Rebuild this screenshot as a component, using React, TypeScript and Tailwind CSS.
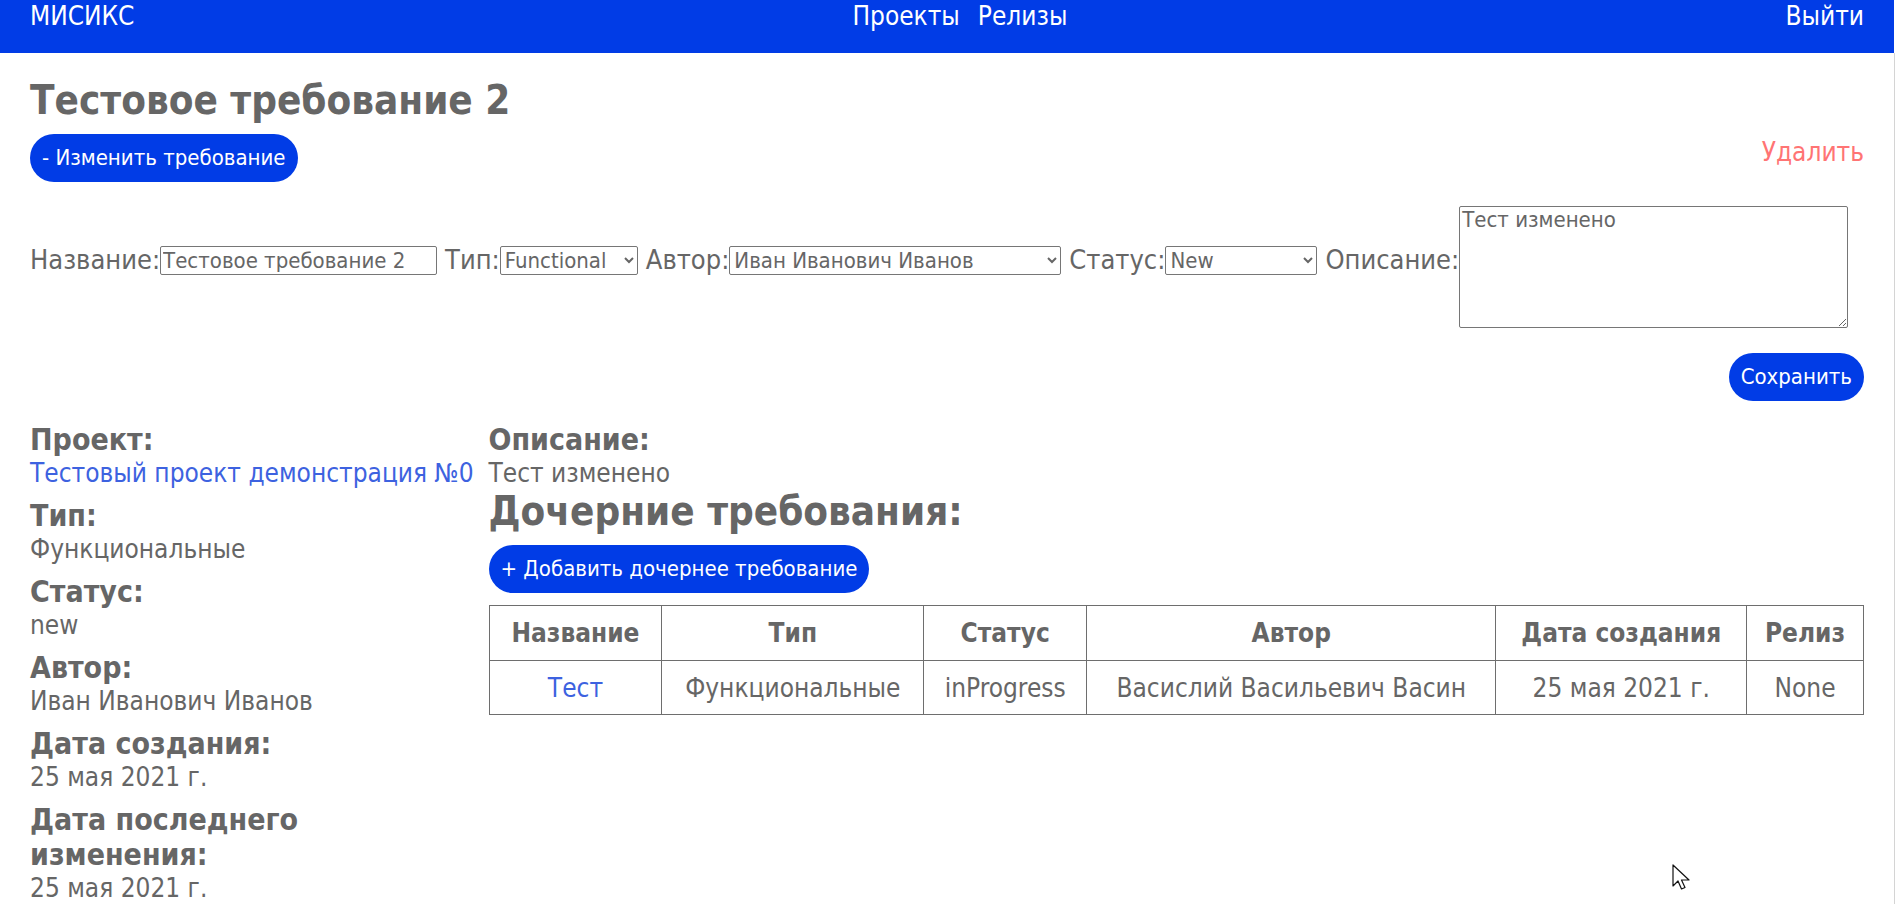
import React from "react";

const font = { fontFamily: '"DejaVu Sans Condensed", "DejaVu Sans", Tahoma, sans-serif' };

const info: { label: string; value: string; link?: boolean }[] = [
  { label: "Проект:", value: "Тестовый проект демонстрация №0", link: true },
  { label: "Тип:", value: "Функциональные" },
  { label: "Статус:", value: "new" },
  { label: "Автор:", value: "Иван Иванович Иванов" },
  { label: "Дата создания:", value: "25 мая 2021 г." },
  { label: "Дата последнего изменения:", value: "25 мая 2021 г." },
];

const columns = [
  { title: "Название", w: "w-[173px]" },
  { title: "Тип", w: "w-[262px]" },
  { title: "Статус", w: "w-[163px]" },
  { title: "Автор", w: "w-[410px]" },
  { title: "Дата создания", w: "w-[251px]" },
  { title: "Релиз", w: "w-[117px]" },
];

const NavBar = () => (
  <nav className="h-[53px] bg-[#013ce6] text-white text-[26px] leading-[32px] flex justify-between items-start px-[30px]">
    <a>МИСИКС</a>
    <div className="flex gap-[18px]">
      <a>Проекты</a>
      <a>Релизы</a>
    </div>
    <a>Выйти</a>
  </nav>
);

const PillButton: React.FC<{ children: React.ReactNode }> = ({ children }) => (
  <button className="bg-[#013ce6] text-white rounded-full h-[48px] px-[12px] text-[22px] leading-[26px]">
    {children}
  </button>
);

const field = "h-[29px] border border-[#767676] rounded-[2px] text-[22px] leading-[26px]";

const EditForm = () => (
  <div className="mt-[10px]">
    <div className="flex items-center text-[27px] leading-[32px]">
      <label>Название:</label>
      <input className={"w-[277px] px-[2px] " + field} defaultValue="Тестовое требование 2" />
      <label className="ml-[8px]">Тип:</label>
      <select className={"w-[138px] " + field} defaultValue="Functional">
        <option>Functional</option>
      </select>
      <label className="ml-[8px]">Автор:</label>
      <select className={"w-[332px] " + field}>
        <option>Иван Иванович Иванов</option>
      </select>
      <label className="ml-[8px]">Статус:</label>
      <select className={"w-[152px] " + field}>
        <option>New</option>
      </select>
      <label className="ml-[8px]">Описание:</label>
      <textarea
        className="mt-[14px] w-[389px] h-[122px] border border-[#767676] rounded-[2px] px-[2px] text-[22px] leading-[26px]"
        defaultValue="Тест изменено"
      />
    </div>
    <div className="flex justify-end mt-[25px]">
      <PillButton>Сохранить</PillButton>
    </div>
  </div>
);

const Details = () => (
  <div className="w-1/4 shrink-0 pr-[8px]">
    {info.map((row) => (
      <div key={row.label} className="mb-[9px]">
        <h3 className="font-bold text-[30px] leading-[35px]">{row.label}</h3>
        <div className={"text-[26px] leading-[32px] " + (row.link ? "text-[#3d62e0]" : "")}>{row.value}</div>
      </div>
    ))}
  </div>
);

const Children = () => (
  <div className="flex-1">
    <h3 className="font-bold text-[30px] leading-[35px]">Описание:</h3>
    <div className="text-[26px] leading-[32px]">Тест изменено</div>
    <h2 className="font-bold text-[40px] leading-[44px]">Дочерние требования:</h2>
    <div className="mt-[12px]">
      <PillButton>+ Добавить дочернее требование</PillButton>
    </div>
    <table className="mt-[12px] w-full border-collapse text-[26px] leading-[32px] text-center">
      <thead>
        <tr>
          {columns.map((c) => (
            <th key={c.title} className={"border border-[#6e6e6e] font-bold h-[55px] " + c.w}>
              {c.title}
            </th>
          ))}
        </tr>
      </thead>
      <tbody>
        <tr>
          <td className="border border-[#6e6e6e] h-[54px] text-[#3d62e0]">Тест</td>
          <td className="border border-[#6e6e6e]">Функциональные</td>
          <td className="border border-[#6e6e6e]">inProgress</td>
          <td className="border border-[#6e6e6e]">Васислий Васильевич Васин</td>
          <td className="border border-[#6e6e6e]">25 мая 2021 г.</td>
          <td className="border border-[#6e6e6e]">None</td>
        </tr>
      </tbody>
    </table>
  </div>
);

export default function App() {
  return (
    <div className="h-[904px] overflow-hidden bg-white text-[#666] flex relative" style={font}>
      <div className="flex-1 min-w-0">
        <NavBar />
        <main className="px-[30px] pt-[24px]">
          <h1 className="font-bold text-[40px] leading-[46px]">Тестовое требование 2</h1>
          <div className="flex justify-between items-start mt-[11px]">
            <PillButton>- Изменить требование</PillButton>
            <a className="text-[#ff7474] text-[26px] leading-[32px] mt-[2px]">Удалить</a>
          </div>
          <EditForm />
          <div className="flex mt-[21px]">
            <Details />
            <Children />
          </div>
        </main>
      </div>
      <div className="w-[4px] mt-[53px] border-l border-[#d4d4d4]" />
      <svg className="absolute left-[1672px] top-[864px]" width="19" height="28" viewBox="0 0 19 28">
        <path d="M1 1 L1 22 L6 17 L9.5 25 L13 23.5 L9.5 16 L17 16 Z" fill="#fff" stroke="#111" strokeWidth="1.2" strokeLinejoin="round" />
      </svg>
    </div>
  );
}
